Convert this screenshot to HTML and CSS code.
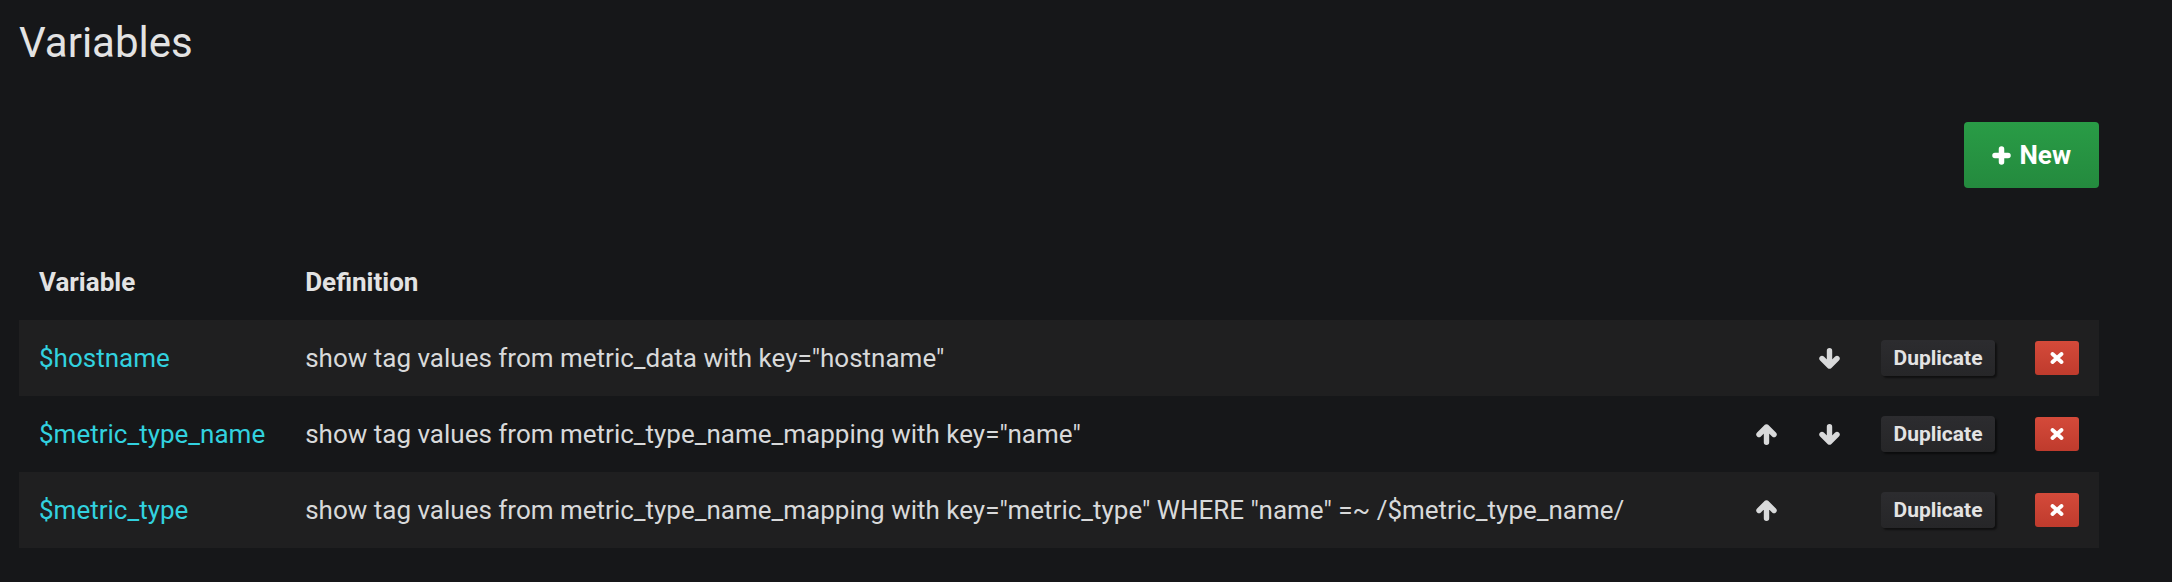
FILE: index.html
```html
<!DOCTYPE html>
<html>
<head>
<meta charset="utf-8">
<link rel="stylesheet" href="styles.css">
</head>
<body>
<div class="page">
  <h1 class="title">Variables</h1>
  <div class="toolbar">
    <button class="btn-new">
      <svg class="plus" viewBox="0 0 19 19"><path d="M9.5 3 V16 M3 9.5 H16" stroke="#fff" stroke-width="5.5" stroke-linecap="round"/></svg>
      <span>New</span>
    </button>
  </div>
  <table class="vars">
    <thead>
      <tr><th class="c-name">Variable</th><th>Definition</th><th></th><th></th><th></th><th></th></tr>
    </thead>
    <tbody>
      <tr>
        <td class="c-name"><span class="var">$hostname</span></td>
        <td>show tag values from metric_data with key="hostname"</td>
        <td class="c-icon"></td>
        <td class="c-icon"><svg class="arrow" viewBox="0 0 23 21"><path d="M11.5 2.8 V18 M4 10.5 L11.5 18 L19 10.5" fill="none" stroke="#d8d9da" stroke-width="5.4" stroke-linecap="round" stroke-linejoin="round"/></svg></td>
        <td class="c-btn"><button class="btn-dup">Duplicate</button></td>
        <td class="c-btn"><button class="btn-del"><svg viewBox="0 0 14 12"><path d="M2.5 2 L11.5 10 M11.5 2 L2.5 10" stroke="#fff" stroke-width="3.8" stroke-linecap="round"/></svg></button></td>
      </tr>
      <tr>
        <td class="c-name"><span class="var">$metric_type_name</span></td>
        <td>show tag values from metric_type_name_mapping with key="name"</td>
        <td class="c-icon"><svg class="arrow" viewBox="0 0 23 21"><path d="M11.5 18.2 V3 M4 10.5 L11.5 3 L19 10.5" fill="none" stroke="#d8d9da" stroke-width="5.4" stroke-linecap="round" stroke-linejoin="round"/></svg></td>
        <td class="c-icon"><svg class="arrow" viewBox="0 0 23 21"><path d="M11.5 2.8 V18 M4 10.5 L11.5 18 L19 10.5" fill="none" stroke="#d8d9da" stroke-width="5.4" stroke-linecap="round" stroke-linejoin="round"/></svg></td>
        <td class="c-btn"><button class="btn-dup">Duplicate</button></td>
        <td class="c-btn"><button class="btn-del"><svg viewBox="0 0 14 12"><path d="M2.5 2 L11.5 10 M11.5 2 L2.5 10" stroke="#fff" stroke-width="3.8" stroke-linecap="round"/></svg></button></td>
      </tr>
      <tr>
        <td class="c-name"><span class="var">$metric_type</span></td>
        <td>show tag values from metric_type_name_mapping with key="metric_type" WHERE "name" =~ /$metric_type_name/</td>
        <td class="c-icon"><svg class="arrow" viewBox="0 0 23 21"><path d="M11.5 18.2 V3 M4 10.5 L11.5 3 L19 10.5" fill="none" stroke="#d8d9da" stroke-width="5.4" stroke-linecap="round" stroke-linejoin="round"/></svg></td>
        <td class="c-icon"></td>
        <td class="c-btn"><button class="btn-dup">Duplicate</button></td>
        <td class="c-btn"><button class="btn-del"><svg viewBox="0 0 14 12"><path d="M2.5 2 L11.5 10 M11.5 2 L2.5 10" stroke="#fff" stroke-width="3.8" stroke-linecap="round"/></svg></button></td>
      </tr>
    </tbody>
  </table>
</div>
</body>
</html>
```

FILE: styles.css
```css
html, body {
  margin: 0;
  padding: 0;
  background: #161719;
}
body {
  font-family: Roboto, "Liberation Sans", sans-serif;
  color: #d8d9da;
}
.page {
  width: 2080px;
  margin-left: 19px;
}
.title {
  margin: 18px 0 0 0;
  font-size: 42px;
  line-height: 50px;
  font-weight: 400;
  color: #e3e3e3;
}
.toolbar {
  display: flex;
  justify-content: flex-end;
  margin-top: 54px;
}
.btn-new {
  display: flex;
  align-items: center;
  gap: 9px;
  height: 66px;
  padding: 0 28px;
  border: none;
  border-radius: 4px;
  background: linear-gradient(#299c46, #248a3e);
  color: #fff;
  font-family: Roboto, "Liberation Sans", sans-serif;
  font-size: 26px;
  font-weight: 700;
}
.plus {
  width: 19px;
  height: 19px;
}
.vars {
  width: 100%;
  margin-top: 56px;
  border-collapse: collapse;
  font-size: 26px;
}
.vars th {
  height: 76px;
  padding: 0 20px;
  text-align: left;
  font-weight: 700;
  color: #e3e3e3;
  white-space: nowrap;
}
.vars td {
  height: 76px;
  padding: 0 20px;
  white-space: nowrap;
  vertical-align: middle;
}
.vars tbody tr:nth-child(odd) {
  background: #1f1f20;
}
.c-name {
  width: 226px;
}
.c-icon {
  width: 23px;
}
.c-btn {
  width: 1px;
}
.var {
  color: #32d1df;
}
.arrow {
  display: block;
  width: 23px;
  height: 21px;
}
.btn-dup {
  display: block;
  width: 114px;
  height: 36px;
  padding: 0;
  border: none;
  border-radius: 4px;
  background: linear-gradient(#2c2c2f, #262628);
  box-shadow: 2px 2px 2px rgba(0, 0, 0, 0.5);
  color: #e3e3e3;
  font-family: Roboto, "Liberation Sans", sans-serif;
  font-size: 21px;
  font-weight: 700;
}
.btn-del {
  display: flex;
  align-items: center;
  justify-content: center;
  width: 44px;
  height: 34px;
  padding: 0;
  border: none;
  border-radius: 3px;
  background: linear-gradient(#d44a3a, #bf3b2d);
}
.btn-del svg {
  width: 14px;
  height: 12px;
}
```
